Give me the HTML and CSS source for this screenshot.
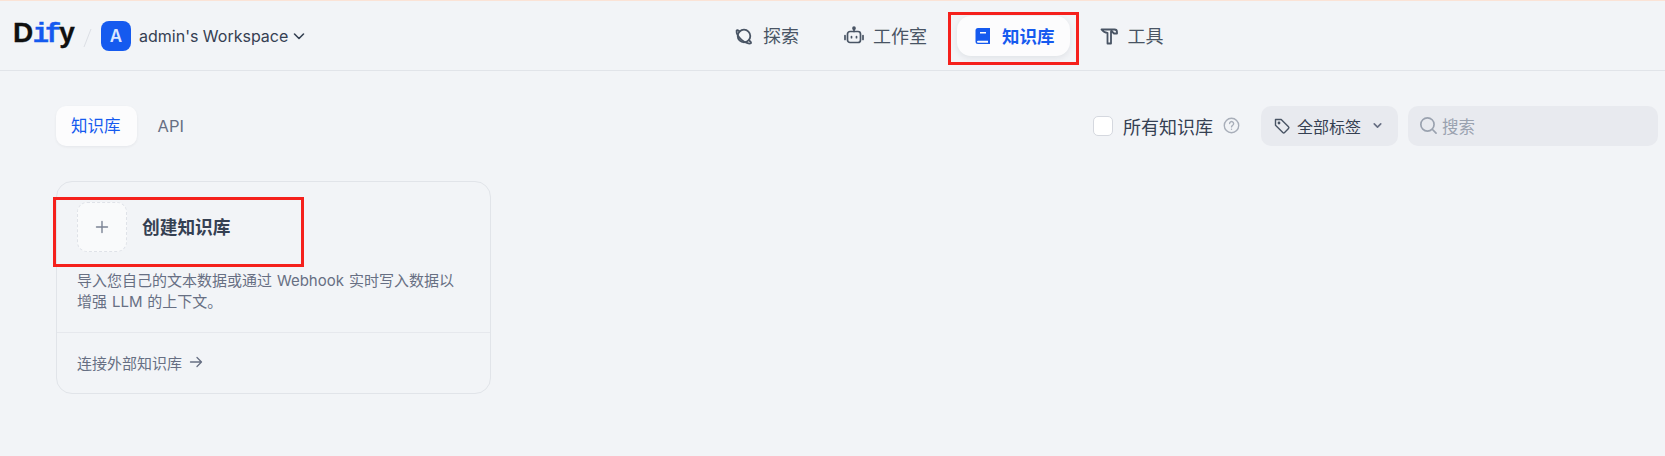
FILE: index.html
```html
<!DOCTYPE html>
<html lang="zh">
<head>
<meta charset="utf-8">
<title>Dify</title>
<link rel="stylesheet" href="styles.css">
</head>
<body>
<header class="top">
  <div class="brand">
    <div class="logo">D<span class="logo-if">if</span>y</div>
    <svg class="slash" width="9" height="20" viewBox="0 0 9 20"><path d="M8 1 1 19" stroke="#dcdfe5" stroke-width="1" fill="none"/></svg>
    <div class="avatar">A</div>
    <div class="ws">admin's Workspace</div>
    <svg class="ws-caret" width="16" height="16" viewBox="0 0 16 16"><path d="M3.500 6 8 10.500 12.500 6" stroke="#354052" stroke-width="1.600" fill="none" stroke-linecap="round" stroke-linejoin="round"/></svg>
  </div>
  <nav class="nav">
    <a class="nav-item">
      <svg width="20" height="20" viewBox="0 0 20 20" fill="none" stroke="#495464" stroke-width="1.800" stroke-linecap="round"><circle cx="10" cy="10" r="6.300"/><path d="M5.600 5.500C3.800 4 2.700 3.800 2.600 4.600c-.3 2.400 2 6.500 5 9.200 3.300 2.900 7.800 4.400 9.200 3.400.6-.5.100-1.300-1.300-2.500"/></svg>
      <span>探索</span>
    </a>
    <a class="nav-item studio">
      <svg width="22" height="22" viewBox="0 0 22 22" fill="none" stroke="#495464" stroke-width="1.700" stroke-linecap="round"><rect x="4.500" y="6.500" width="13" height="11" rx="2.500"/><path d="M11 6.500V4"/><circle cx="11" cy="3.200" r="1"/><path d="M2 10.500v4M20 10.500v4"/><path d="M8.500 11.500v1.200M13.500 11.500v1.200"/></svg>
      <span>工作室</span>
    </a>
    <a class="nav-item active">
      <svg width="20" height="20" viewBox="0 0 20 20"><path fill="#155aef" fill-rule="evenodd" d="M5 2h12v16H5a2.500 2.500 0 0 1-2.500-2.500v-11A2.500 2.500 0 0 1 5 2Zm2 4v1.500h6V6H7Zm-2 8.700a1 1 0 0 0 0 2h10v-2H5Z"/></svg>
      <span>知识库</span>
    </a>
    <a class="nav-item">
      <svg width="20" height="20" viewBox="0 0 20 20" fill="none" stroke="#495464" stroke-width="1.800" stroke-linejoin="round"><path d="M2.500 3.500H15.500a2.500 2.500 0 0 1 2.500 2.500v1.500h-3l-2-2H12V17.500H8.500V6.800C6 6.800 4 5.500 2.500 3.500Z"/></svg>
      <span>工具</span>
    </a>
  </nav>
</header>
<main class="main">
  <div class="toolbar">
    <div class="tabs">
      <a class="tab active">知识库</a>
      <a class="tab">API</a>
    </div>
    <div class="filters">
      <label class="check"><span class="box"></span><span>所有知识库</span>
        <svg width="17" height="17" viewBox="0 0 16 16" fill="none" stroke="#a8aeb9" stroke-width="1.300" stroke-linecap="round"><circle cx="8" cy="8" r="6.800"/><path d="M6.200 6.200a1.900 1.900 0 1 1 2.900 1.600c-.7.400-1.100.8-1.100 1.500"/><path d="M8 11.400v.1"/></svg>
      </label>
      <div class="tag-select">
        <svg width="18" height="18" viewBox="0 0 18 18" fill="none" stroke="#495464" stroke-width="1.400" stroke-linejoin="round"><path d="M2.500 2.500h5.700l7.300 7.300a1.300 1.300 0 0 1 0 1.800l-3.900 3.900a1.300 1.300 0 0 1-1.800 0L2.500 8.200Z"/><circle cx="6" cy="6" r=".7"/></svg>
        <span>全部标签</span>
        <svg width="13" height="13" viewBox="0 0 12 12" fill="none" stroke="#676f83" stroke-width="1.500" stroke-linecap="round" stroke-linejoin="round"><path d="M3 4.500 6 7.500 9 4.500"/></svg>
      </div>
      <div class="search">
        <svg width="21" height="21" viewBox="0 0 20 20" fill="none" stroke="#9aa2af" stroke-width="1.600" stroke-linecap="round"><circle cx="9" cy="9" r="6.300"/><path d="m13.800 13.800 3.400 3.400"/></svg>
        <span>搜索</span>
      </div>
    </div>
  </div>
  <section class="card">
    <div class="card-body">
      <div class="create">
        <div class="plus"><svg width="16" height="16" viewBox="0 0 16 16" stroke="#7b8394" stroke-width="1.400" stroke-linecap="round"><path d="M8 2.500v11M2.500 8h11"/></svg></div>
        <div class="create-title">创建知识库</div>
      </div>
      <p class="desc">导入您自己的文本数据或通过 Webhook 实时写入数据以增强 LLM 的上下文。</p>
    </div>
    <div class="card-foot">
      <span>连接外部知识库</span>
      <svg width="14" height="14" viewBox="0 0 14 14" fill="none" stroke="#676f83" stroke-width="1.300" stroke-linecap="round" stroke-linejoin="round"><path d="M1.500 7h11M8 2.500 12.500 7 8 11.500"/></svg>
    </div>
  </section>
</main>
<div class="mark mark-nav"></div>
<div class="mark mark-create"></div>
</body>
</html>
```
FILE: styles.css
```css
* { box-sizing: border-box; }
html, body { margin: 0; height: 100%; }
body {
  position: relative;
  width: 1665px;
  height: 456px;
  overflow: hidden;
  background: #f2f4f7;
  color: #354052;
  font-family: Inter, "Noto Sans CJK SC", sans-serif;
  border-top: 1px solid #fbe3d6;
}
.top {
  position: relative;
  height: 70px;
  border-bottom: 1px solid #e1e4e9;
  display: flex;
  align-items: center;
  padding: 0 13px;
}
.brand { display: flex; align-items: center; }
.logo {
  font-family: "Liberation Sans", sans-serif;
  font-weight: 700;
  font-size: 28px;
  line-height: 36px;
  width: 70px;
  color: #101010;
  -webkit-text-stroke: 0.3px #101010;
  letter-spacing: -0.5px;
  margin-top: -4px;
}
.logo-if {
  font-family: "Liberation Mono", monospace;
  color: #155aef;
  -webkit-text-stroke: 0.4px #155aef;
  font-size: 27px;
  letter-spacing: -4px;
  margin-right: 2px;
}
.slash { margin-right: 9px; margin-top: 4px; }
.avatar {
  width: 30px;
  height: 30px;
  border-radius: 8px;
  background: #155aef;
  color: #dbe6ff;
  font-size: 17px;
  font-weight: 600;
  display: flex;
  align-items: center;
  justify-content: center;
  margin-right: 8px;
}
.ws { font-size: 16px; line-height: 24px; color: #354052; }
.ws-caret { margin-left: 3px; }
.nav {
  position: absolute;
  left: 718px;
  top: 15px;
  display: flex;
  align-items: center;
  gap: 12px;
}
.nav-item {
  height: 40px;
  display: flex;
  align-items: center;
  gap: 9px;
  padding: 0 16px;
  border-radius: 14px;
  font-size: 18px;
  color: #495464;
}
.nav-item.studio { gap: 8px; }
.nav-item span { margin-top: -2px; }
.nav-item.active {
  background: #fcfcfd;
  color: #155aef;
  font-weight: 600;
  font-size: 17.500px;
  padding: 0 15px 0 16px;
  margin: 0 1px 0 2px;
  box-shadow: 0 2px 6px rgba(16, 24, 40, 0.08);
}
.main { padding: 0 0 0 56px; }
.toolbar {
  display: flex;
  justify-content: space-between;
  align-items: center;
  padding: 34px 7px 0 0;
  height: 75px;
}
.tabs { display: flex; gap: 6px; align-items: center; }
.tab {
  height: 40px;
  padding: 0 16px 0 15px;
  border-radius: 10px;
  font-size: 16.500px;
  line-height: 40px;
  color: #676f83;
}
.tab.active {
  background: #fcfcfd;
  color: #155aef;
  box-shadow: 0 1px 3px rgba(16, 24, 40, 0.06);
}
.filters { display: flex; align-items: center; }
.check { display: flex; align-items: center; font-size: 18px; color: #354052; margin-right: 21px; }
.box {
  width: 20px;
  height: 20px;
  background: #fff;
  border: 1px solid #d5d8df;
  border-radius: 5px;
  margin-right: 10px;
}
.check svg { margin-left: 10px; }
.tag-select {
  width: 137px;
  height: 40px;
  background: #e8eaef;
  border-radius: 10px;
  display: flex;
  align-items: center;
  padding-left: 12px;
  font-size: 16px;
  color: #354052;
}
.tag-select span { margin: 0 10px 0 6px; }
.search {
  width: 250px;
  height: 40px;
  margin-left: 10px;
  background: #e8eaef;
  border-radius: 10px;
  display: flex;
  align-items: center;
  gap: 3px;
  padding-left: 10px;
  font-size: 16.500px;
  color: #9aa2af;
}
.card {
  width: 435px;
  height: 213px;
  margin-top: 35px;
  border: 1px solid #e1e4e9;
  border-radius: 16px;
}
.card-body { height: 151px; border-bottom: 1px solid #e6e8ed; padding: 20px 28px 0 20px; }
.create { display: flex; align-items: center; gap: 15px; }
.plus {
  width: 50px;
  height: 50px;
  background: #f9fafb;
  border: 1px dashed #dfe2e8;
  border-radius: 10px;
  display: flex;
  align-items: center;
  justify-content: center;
}
.create-title { font-size: 17.700px; font-weight: 600; color: #354052; margin-top: -2px; }
.desc {
  margin: 18px 0 0;
  font-size: 15px;
  line-height: 21px;
  word-spacing: 0.7px;
  color: #676f83;
}
.card-foot {
  display: flex;
  align-items: center;
  gap: 7px;
  height: 58px;
  padding: 0 20px;
  font-size: 15px;
  color: #676f83;
}
.mark { position: absolute; border: 3px solid #f5201c; }
.mark-nav { left: 948px; top: 11px; width: 131px; height: 53px; }
.mark-create { left: 53px; top: 196px; width: 251px; height: 70px; }
```
